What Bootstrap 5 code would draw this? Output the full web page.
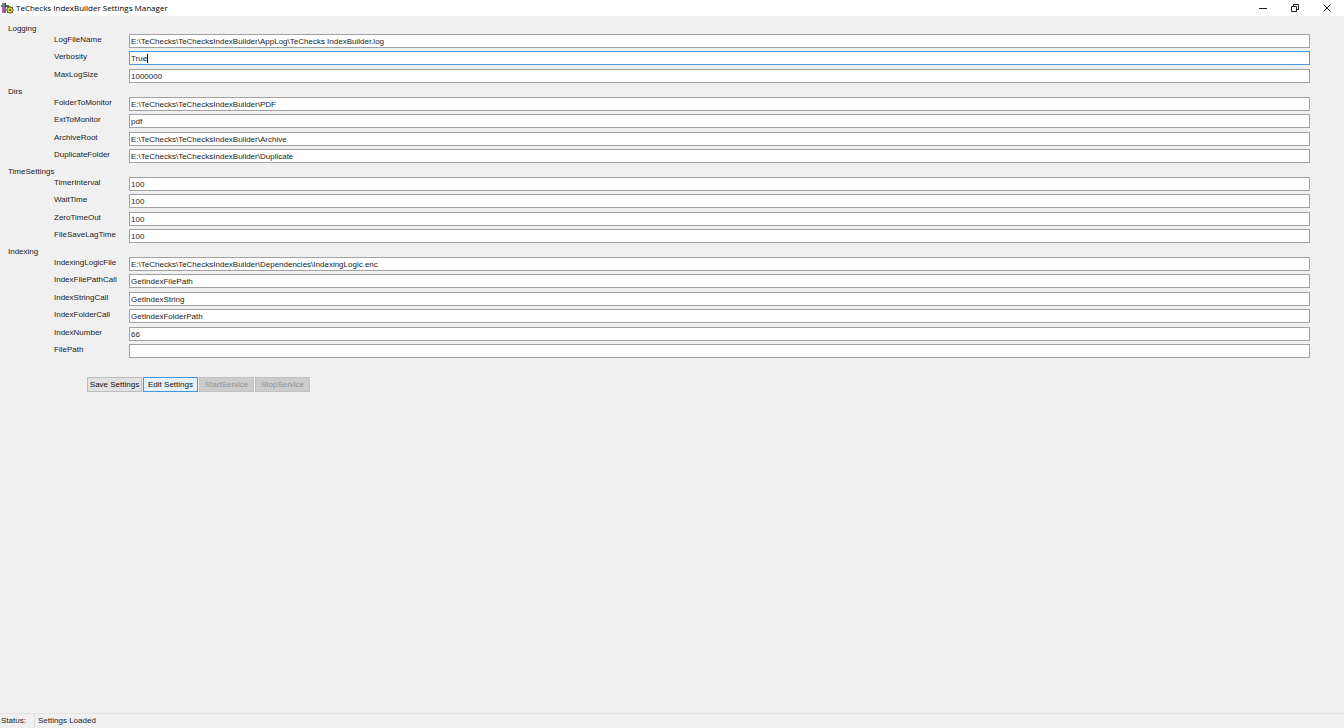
<!DOCTYPE html>
<html lang="en">
<head>
<meta charset="utf-8">
<meta name="viewport" content="width=device-width, initial-scale=1">
<title>TeChecks IndexBuilder Settings Manager</title>
<link href="https://cdn.jsdelivr.net/npm/bootstrap@5.3.0/dist/css/bootstrap.min.css" rel="stylesheet">
<style>
body { background: #f0f0f0; color: #1c1c1c; font: 8px/11px "Liberation Sans", Arial, sans-serif; }
.title-bar { height: 16px; padding: 0 1px; background: #fff; }
.app-icon { width: 13px; height: 13px; }
.app-title { padding-left: 2px; font: 8px/16px "Open Sans", "Segoe UI", sans-serif; color: #000; }
.win-btn { width: 32px; height: 15px; border: 0; background: none; color: #222; }
.settings { padding: 7px 34px 0 8px; }
.group-title { font-size: 8px; line-height: 11px; font-weight: 400; }
.setting { height: 17px; padding-left: 46px; }
.setting:nth-of-type(even):not(:last-child) { height: 18px; }
.setting label { flex: 0 0 75px; line-height: 11px; }
.setting .form-control { height: 14px; min-height: 0; padding: 1px 1px 0; border: 1px solid #a2a2a2; border-radius: 0; font-size: 8px; line-height: 11px; color: #1c1c1c; background: #fff; transition: none; }
.setting .form-control:focus { border-color: #4a9be0; box-shadow: none; caret-color: transparent; }
.text-caret { top: 3px; left: 18px; width: 1px; height: 9px; background: #000; }
.actions { padding: 16px 0 0 79px; gap: 1px; }
.actions .btn { --bs-btn-font-size: 8px; --bs-btn-line-height: 11px; --bs-btn-border-radius: 0; --bs-btn-padding-x: 0; --bs-btn-padding-y: 1px; --bs-btn-color: #111; --bs-btn-bg: #e1e1e1; --bs-btn-border-color: #bcbcbc; --bs-btn-disabled-bg: #cccccc; --bs-btn-disabled-border-color: #c2c2c2; --bs-btn-disabled-color: #909090; --bs-btn-disabled-opacity: 1; width: 55px; transition: none; }
.actions .btn-current { --bs-btn-bg: #e5f1fb; --bs-btn-border-color: #4595d8; }
.status-bar { height: 15px; border-top: 1px solid #e2e2e2; line-height: 14px; }
.status-name { width: 35px; padding-left: 1px; border-right: 1px solid #dcdcdc; }
.status-text { padding-left: 3px; }
</style>
</head>
<body class="d-flex flex-column min-vh-100">
<header class="title-bar d-flex align-items-center">
  <svg class="app-icon" viewBox="0 0 13 13" aria-hidden="true">
    <path d="M0 3h3v2H0z" fill="#5a9a50"/><path d="M1 1h3v3H1z" fill="#7d8478"/><path d="M1 5h2v6H1z" fill="#c050c8"/><path d="M3 3h2v8H3z" fill="#8a5a98"/><path d="M4 1h1v4H4z" fill="#444"/><path d="M5 3h3v2H5z" fill="#397040"/>
    <circle cx="9" cy="8" r="3" fill="#ddd63c" stroke="#68651f" stroke-width="1"/><path d="M9 4v1M9 11v1M5 8h1M12 8h1M6 5l1 1M11 10l1 1M12 5l-1 1M7 10l-1 1" stroke="#68651f"/><circle cx="9" cy="8" r="1" fill="#4b491c"/>
  </svg>
  <h1 class="app-title mb-0 flex-grow-1">TeChecks IndexBuilder Settings Manager</h1>
  <button type="button" class="win-btn p-0 d-flex align-items-center justify-content-center" aria-label="Minimize"><svg width="8" height="8"><path d="M0 4.500h8" stroke="currentColor"/></svg></button>
  <button type="button" class="win-btn p-0 d-flex align-items-center justify-content-center" aria-label="Restore"><svg width="8" height="8" fill="none" stroke="currentColor"><path d="M.5 2.500h5v5h-5zM2.500 2.500v-2h5v5h-2"/></svg></button>
  <button type="button" class="win-btn p-0 d-flex align-items-center justify-content-center" aria-label="Close"><svg width="8" height="8" stroke="currentColor"><path d="M.5.5l7 7M7.500.5l-7 7"/></svg></button>
</header>
<main class="settings flex-grow-1">
  <section>
    <h2 class="group-title mb-0">Logging</h2>
    <div class="setting d-flex"><label for="LogFileName">LogFileName</label><input class="form-control" id="LogFileName" value="E:\TeChecks\TeChecksIndexBuilder\AppLog\TeChecks IndexBuilder.log"></div>
    <div class="setting d-flex"><label for="Verbosity">Verbosity</label><span class="position-relative flex-grow-1"><input class="form-control d-block" id="Verbosity" value="True" autofocus><span class="text-caret position-absolute"></span></span></div>
    <div class="setting d-flex"><label for="MaxLogSize">MaxLogSize</label><input class="form-control" id="MaxLogSize" value="1000000"></div>
  </section>
  <section>
    <h2 class="group-title mb-0">Dirs</h2>
    <div class="setting d-flex"><label for="FolderToMonitor">FolderToMonitor</label><input class="form-control" id="FolderToMonitor" value="E:\TeChecks\TeChecksIndexBuilder\PDF"></div>
    <div class="setting d-flex"><label for="ExtToMonitor">ExtToMonitor</label><input class="form-control" id="ExtToMonitor" value="pdf"></div>
    <div class="setting d-flex"><label for="ArchiveRoot">ArchiveRoot</label><input class="form-control" id="ArchiveRoot" value="E:\TeChecks\TeChecksIndexBuilder\Archive"></div>
    <div class="setting d-flex"><label for="DuplicateFolder">DuplicateFolder</label><input class="form-control" id="DuplicateFolder" value="E:\TeChecks\TeChecksIndexBuilder\Duplicate"></div>
  </section>
  <section>
    <h2 class="group-title mb-0">TimeSettings</h2>
    <div class="setting d-flex"><label for="TimerInterval">TimerInterval</label><input class="form-control" id="TimerInterval" value="100"></div>
    <div class="setting d-flex"><label for="WaitTime">WaitTime</label><input class="form-control" id="WaitTime" value="100"></div>
    <div class="setting d-flex"><label for="ZeroTimeOut">ZeroTimeOut</label><input class="form-control" id="ZeroTimeOut" value="100"></div>
    <div class="setting d-flex"><label for="FileSaveLagTime">FileSaveLagTime</label><input class="form-control" id="FileSaveLagTime" value="100"></div>
  </section>
  <section>
    <h2 class="group-title mb-0">Indexing</h2>
    <div class="setting d-flex"><label for="IndexingLogicFile">IndexingLogicFile</label><input class="form-control" id="IndexingLogicFile" value="E:\TeChecks\TeChecksIndexBuilder\Dependencies\IndexingLogic.enc"></div>
    <div class="setting d-flex"><label for="IndexFilePathCall">IndexFilePathCall</label><input class="form-control" id="IndexFilePathCall" value="GetIndexFilePath"></div>
    <div class="setting d-flex"><label for="IndexStringCall">IndexStringCall</label><input class="form-control" id="IndexStringCall" value="GetIndexString"></div>
    <div class="setting d-flex"><label for="IndexFolderCall">IndexFolderCall</label><input class="form-control" id="IndexFolderCall" value="GetIndexFolderPath"></div>
    <div class="setting d-flex"><label for="IndexNumber">IndexNumber</label><input class="form-control" id="IndexNumber" value="66"></div>
    <div class="setting d-flex"><label for="FilePath">FilePath</label><input class="form-control" id="FilePath" value=""></div>
  </section>
  <div class="actions d-flex">
    <button type="button" class="btn">Save Settings</button>
    <button type="button" class="btn btn-current">Edit Settings</button>
    <button type="button" class="btn" disabled>StartService</button>
    <button type="button" class="btn" disabled>StopService</button>
  </div>
</main>
<footer class="status-bar d-flex align-items-stretch">
  <span class="status-name">Status:</span><span class="status-text">Settings Loaded</span>
</footer>
<script src="https://cdn.jsdelivr.net/npm/bootstrap@5.3.0/dist/js/bootstrap.bundle.min.js"></script>
<script>
const field = document.getElementById('Verbosity');
field.focus();
field.setSelectionRange(4, 4);
</script>
</body>
</html>
